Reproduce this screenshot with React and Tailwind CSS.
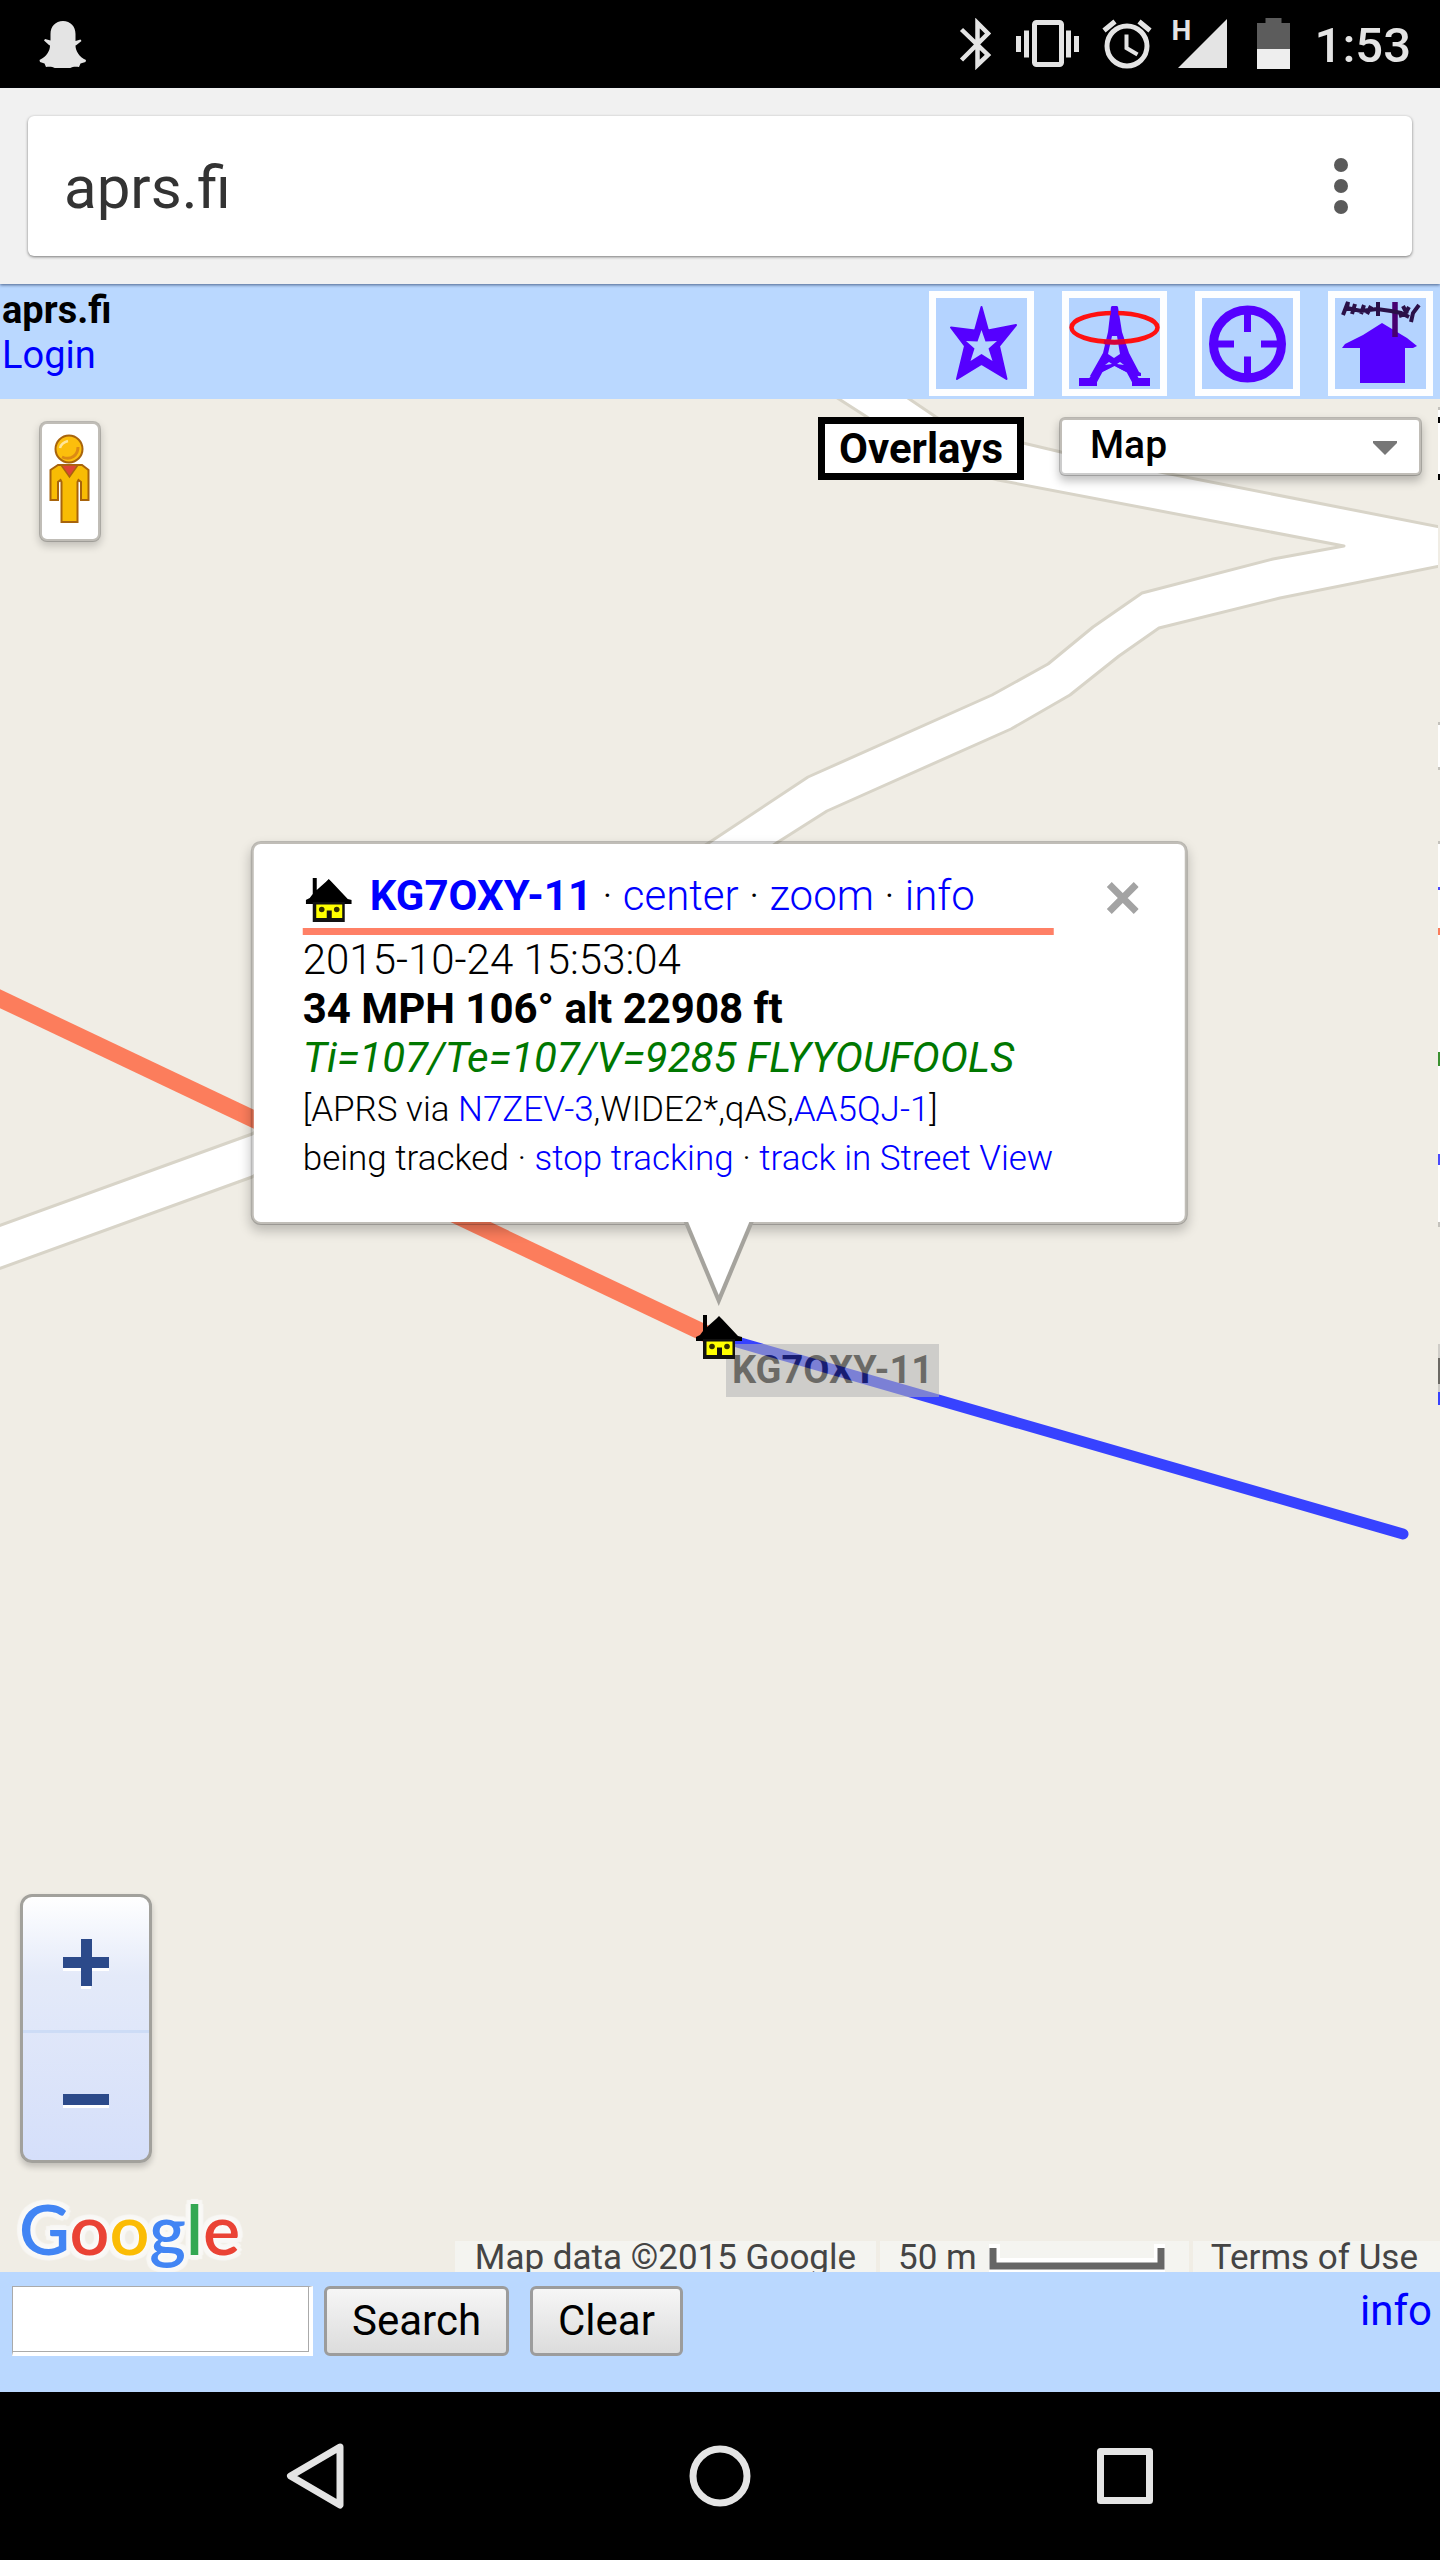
const link = 'text-[#0000ff]';

function Snapchat() {
  return (
    <svg width="48" height="48" viewBox="0 0 48 48" fill="#e4e4e4" aria-label="Snapchat">
      <path d="M24 1C16.500 1 11.500 6.500 11.500 14v6.500l-5.500-1.500-1 1.500 5 4.500 1 .5c0 5-3 11-10.500 14.500l.5 2 4.500 1.500 1.500 3.500c5-.5 8 0 10.500 2.200 2.500 1.800 4 2.300 6 2.300s3.500-.5 6-2.300c2.500-2.200 5.500-2.700 10.500-2.200l1.500-3.500 5-1.500.5-2C40 37 36.500 30.500 36.500 25.500l1-.5 5-4-1-1.500-5 1.500V14C36.500 6.500 31.500 1 24 1z" />
    </svg>
  );
}

function StatusIcons() {
  return (
    <div className="flex items-center text-[#e4e4e4]">
      <svg width="34" height="52" viewBox="0 0 34 52" fill="none" stroke="currentColor" strokeWidth="4.500" aria-label="Bluetooth">
        <path d="M2.500 11.500 29 37 18.500 47V5L29 15.500 2.500 42" />
      </svg>
      <svg className="ml-[23px]" width="64" height="52" viewBox="0 0 64 52" fill="currentColor" aria-label="Vibrate">
        <rect x="18.500" y="4.500" width="27" height="42" rx="2" fill="none" stroke="currentColor" strokeWidth="5" />
        <path d="M0 18h5v16H0zM8 12.500h5v27H8zM50 12.500h5v27h-5zM58 18h5v16h-5z" />
      </svg>
      <svg className="ml-[22px]" width="50" height="52" viewBox="0 0 50 52" fill="none" stroke="currentColor" strokeWidth="5" aria-label="Alarm">
        <circle cx="25" cy="28" r="20" />
        <path d="M2 12.500 13 3.500M48 12.500 37 3.500" />
        <path d="M24.500 16.500V30l11 6.500" strokeWidth="4" />
      </svg>
      <div className="relative ml-[20px]">
        <svg width="56" height="52" viewBox="0 0 56 52" fill="currentColor" aria-label="Signal">
          <path d="M55 1v49H6z" />
        </svg>
        <span className="absolute top-0 left-0 text-[28px] leading-[26px] font-bold">H</span>
      </div>
      <svg className="ml-[29px]" width="33" height="52" viewBox="0 0 33 52" aria-label="Battery">
        <path d="M8.500 0h16v5H33v26H0V5h8.500z" fill="#5c5c5c" />
        <path d="M0 31h33v20H0z" fill="#eee" />
      </svg>
      <time className="ml-[25px] pt-1 text-[49px] leading-[52px] font-medium">1:53</time>
    </div>
  );
}

function HouseMark({ className }) {
  return (
    <svg className={className} width="46" height="44" viewBox="0 0 46 44" aria-hidden="true">
      <path d="M7 0h4v12L20 4l3-3 3 3 16 17 4 1v4H0v-4l4-2 3-4z" fill="#000" />
      <path d="M7 24h32v20H7z" fill="#111" />
      <path d="M10.500 26.500h26V40h-26z" fill="#ff0" />
      <path d="M21 32.500h5V41h-5z" fill="#111" />
      <circle cx="16" cy="31.500" r="2.800" fill="#332f00" />
      <circle cx="31" cy="31.500" r="2.800" fill="#332f00" />
    </svg>
  );
}

function ToolButton({ label, children }) {
  return (
    <button aria-label={label} className="size-[105px] border-[7px] border-[#fdfeff] bg-[#b4d3ff]">
      <svg className="size-full overflow-visible" viewBox="0 0 91 91" fill="none" stroke="#5500ff">
        {children}
      </svg>
    </button>
  );
}

function Toolbox() {
  return (
    <nav className="flex gap-[28px]">
      <ToolButton label="Favourites">
        <path d="M45.500 9 52 32.500 80 27 63 48 70.500 81 45.500 66 21 81 29 48 15 29.500 39 32.500z" fill="#5500ff" stroke="#5500ff" strokeWidth="2" strokeLinejoin="round" />
        <path d="M45.500 32 49.500 43.500 61 43 52.500 50.500 56.500 63 45.500 56 34.500 63 38.500 50.500 30 43 41.500 43.500z" fill="#b4d3ff" stroke="none" />
      </ToolButton>
      <ToolButton label="Stations">
        <path d="M42 9h7l4 25 7 21 10 19 2 1v3H64L45.500 68 26 78h-5L34 55l5-21z" fill="#5500ff" stroke="none" />
        <path d="M43 38h5l3 18-6 4-6-4zM36 67l4-3 3 2zM55 67l-4-3-3 2z" fill="#b4d3ff" stroke="none" />
        <path d="M28 79 45.500 71 63 79" stroke="#b4d3ff" strokeWidth="4" />
        <path d="M10 80h18v8H10zM63 80h18v8H63zM26 72l8 1-7 13H16zM57 73l8-1 8 14h-9z" fill="#5500ff" stroke="none" />
        <ellipse cx="45.500" cy="29.500" rx="43" ry="14.500" stroke="#ff1111" strokeWidth="4.500" />
        <path d="M42.500 8h6l3 30-12 0z" fill="#5500ff" stroke="none" />
        <path d="M35 44c7 .6 14 .6 21 0" stroke="#d3003c" strokeWidth="4.500" />
      </ToolButton>
      <ToolButton label="My location">
        <circle cx="45.500" cy="46" r="34" strokeWidth="9" />
        <path d="M45.500 16v18M45.500 58.500V78M14 46h18M59 46h18" strokeWidth="7" />
      </ToolButton>
      <ToolButton label="Home station">
        <path d="M47 25 72 40 82 48 78 50H70V85H25V50H7L10 46 28 37z" fill="#5500ff" stroke="none" />
        <path d="M60 4v35" stroke="#470070" strokeWidth="5.500" />
        <path d="M8 17 13 4 12 10l14 3 16-2 14 2 10 2 8 4M20 6l-3 10M29 7l-3 9M43 4v14M36 8l-4 8M64 18l6-2 4-7M76 24l2-9 6-8M68 8l4 8" stroke="#2a1048" strokeWidth="4" />
      </ToolButton>
    </nav>
  );
}

function MapCanvas() {
  return (
    <svg className="absolute inset-0 size-full" viewBox="0 399 1440 1873" preserveAspectRatio="xMidYMid slice" fill="none" aria-hidden="true">
      <path
        d="M828 392 867 417 925 455Q935 464 998 480L1344 546 1273 559 1142 593 1093 627 1048 664 992 695 808 777 707 844 252 1134-10 1229V1272L252 1177 775 844 827 811 1011 729 1070 695 1119 656 1159 628 1280 598 1450 564V529L1165 473 1061 452 1023 443Q965 435 936 417L899 392z"
        fill="#fff"
        stroke="#d8d4c8"
        strokeWidth="3"
        strokeLinejoin="round"
      />
      <path d="M-10 994 717 1339" stroke="#fc7d5c" strokeWidth="17" />
      <path d="M720 1337 1403 1534" stroke="#3742ff" strokeWidth="11" strokeLinecap="round" />
    </svg>
  );
}

function EdgeSliver() {
  return (
    <svg className="absolute top-0 right-0" width="2" height="1100" viewBox="0 399 2 1100" shapeRendering="crispEdges" aria-hidden="true">
      <path d="M0 399h2v1100H0z" fill="#f0ede5" />
      <path d="M0 407h2v73H0zM0 725h2v42H0zM0 844h2v378H0z" fill="#fff" />
      <path d="M0 417h2v6H0zM0 474h2v6H0z" fill="#000" />
      <path d="M0 407h2v3H0zM0 722h2v3H0zM0 767h2v3H0zM0 841h2v3H0zM0 1222h2v5H0z" fill="#c4c2bc" />
      <path d="M0 887h2v3H0zM0 1154h2v11H0z" fill="#4a4aff" />
      <path d="M0 928h2v7H0z" fill="#fc7d5c" />
      <path d="M0 1052h2v14H0z" fill="#3b9130" />
      <path d="M0 1344h2v53H0z" fill="#cfcdc8" />
      <path d="M0 1358h2v26H0z" fill="#6b6964" />
      <path d="M0 1392h2v13H0z" fill="#3742ff" />
    </svg>
  );
}

function Pegman() {
  return (
    <button aria-label="Street View Pegman" className="absolute top-[22px] left-[39px] rounded-lg border-[3px] border-black/20 bg-white bg-clip-padding shadow-[0_4px_8px_rgba(0,0,0,0.2)]">
      <svg width="56" height="115" viewBox="0 0 56 115" stroke="#a8640c" strokeWidth="2">
        <path d="M16 41h24l6.500 5V76H39V58l-2.500-2-1 2v40H19.500V58l-1-2-2.500 2v18H8.500V46z" fill="#f8bc04" />
        <path d="M19 41h17l-8.500 12z" fill="#dc4437" strokeWidth="1.500" />
        <circle cx="27" cy="25" r="13.500" fill="#fcbe0c" />
        <path d="M20 33c9 4 16-2 16-10" fill="none" stroke="#dc8a14" strokeWidth="3" />
        <path d="M18 24c1-4 4-6 8-7" fill="none" stroke="#ffe69a" strokeWidth="2.500" />
      </svg>
    </button>
  );
}

function ZoomControl() {
  return (
    <div className="absolute bottom-[109px] left-[20px] flex w-[132px] flex-col overflow-hidden rounded-xl border-[3px] border-[#a2a19c] bg-linear-to-b from-[#ffffff] via-[#e4eaf9] via-30% to-[#d5dffa] shadow-[0_4px_6px_rgba(0,0,0,0.2)]">
      <button aria-label="Zoom in" className="flex h-[136px] items-center justify-center border-b-[3px] border-[#cddcf6]">
        <svg width="46" height="50" viewBox="0 0 46 50">
          <path d="M0 21h18v18h10V21h18v11H28v18H18V32H0z" fill="#fff" />
          <path d="M18 0h11v18h17v11H29v18H18V29H0V18h18z" fill="#2c4a8a" />
        </svg>
      </button>
      <button aria-label="Zoom out" className="flex h-[127px] items-center justify-center pt-2">
        <svg width="46" height="14" viewBox="0 0 46 14">
          <path d="M0 3h46v11H0z" fill="#fff" />
          <path d="M0 0h46v11H0z" fill="#2c4a8a" />
        </svg>
      </button>
    </div>
  );
}

function GoogleLogo() {
  return (
    <a
      href="#google"
      aria-label="Google"
      className="absolute bottom-[4px] left-[19px] font-[Lato,sans-serif] text-[70px] leading-[80px] font-semibold [text-shadow:0_0_6px_#fff,5px_0_1px_#f8f7f4,-5px_0_1px_#f8f7f4,0_5px_1px_#f8f7f4,0_-5px_1px_#f8f7f4,4px_4px_1px_#f8f7f4,-4px_4px_1px_#f8f7f4,4px_-4px_1px_#f8f7f4,-4px_-4px_1px_#f8f7f4]"
    >
      <span className="text-[#4285f4]">G</span>
      <span className="text-[#ea4335]">o</span>
      <span className="text-[#fbbc05]">o</span>
      <span className="text-[#4285f4]">g</span>
      <span className="text-[#34a853]">l</span>
      <span className="text-[#ea4335]">e</span>
    </a>
  );
}

function Attribution() {
  return (
    <div className="absolute right-0 bottom-0 flex h-[31px] gap-1 text-[35px] leading-[34px] whitespace-nowrap text-[#444]">
      <span className="bg-[#f4f4f0] px-[20px]">Map data ©2015 Google</span>
      <span className="flex gap-[12px] bg-[#f4f4f0] pr-[24px] pl-[18px]">
        50 m
        <svg width="176" height="31" viewBox="0 0 176 31" fill="none">
          <path d="M0 3h11v14h154V3h11v28H0z" fill="#fff" />
          <path d="M4 7v18h168V7" stroke="#666" strokeWidth="7" />
        </svg>
      </span>
      <a href="#terms" className="bg-[#f4f4f0] pr-[22px] pl-[18px]">Terms of Use</a>
    </div>
  );
}

function StationPopup() {
  return (
    <section className="absolute bottom-[111px] -left-px flex w-max -translate-x-1/2 gap-[53px] rounded-[10px] border-[3px] border-black/20 bg-white bg-clip-padding pt-[27px] pr-[46px] pb-[39px] pl-[49px] text-[42px] leading-[49px] font-light whitespace-nowrap text-black shadow-[0_6px_12px_rgba(0,0,0,0.22)]">
      <div>
        <h1 className="flex h-[64px] border-b-[7px] border-[#ff8066] leading-[50px]">
          <HouseMark className="mt-[7px] mr-[18px] ml-[3px]" />
          <span>
            <a href="#station" className={`${link} font-bold`}>KG7OXY-11</a> · <a href="#center" className={link}>center</a> · <a href="#zoom" className={link}>zoom</a> · <a href="#info" className={link}>info</a>
          </span>
        </h1>
        <p>2015-10-24 15:53:04</p>
        <p className="font-bold">34 MPH 106° alt 22908 ft</p>
        <p className="font-normal text-[#007700] italic">Ti=107/Te=107/V=9285 FLYYOUFOOLS</p>
        <p className="pt-[3px] text-[35px]">
          [APRS via <a href="#n7zev" className={link}>N7ZEV-3</a>,WIDE2*,qAS,<a href="#aa5qj" className={link}>AA5QJ-1</a>]
        </p>
        <p className="text-[35px]">
          being tracked · <a href="#stop" className={link}>stop tracking</a> · <a href="#street" className={link}>track in Street View</a>
        </p>
      </div>
      <button aria-label="Close" className="mt-[11px] self-start">
        <svg width="32" height="32" viewBox="0 0 32 32" stroke="#a3a3a3" strokeWidth="7" strokeLinecap="square">
          <path d="M5 5l22 22M27 5 5 27" />
        </svg>
      </button>
      <svg className="absolute top-full left-1/2 -translate-x-1/2 overflow-visible" width="76" height="86" viewBox="0 0 76 86" aria-hidden="true">
        <path d="M3 0 38 84 73 0z" fill="#a5a39d" />
        <path d="M7 -1 38 73 69 -1z" fill="#fff" />
      </svg>
    </section>
  );
}

function MapView() {
  return (
    <main className="relative min-h-[1400px] flex-1 overflow-hidden bg-[#f0ede5]">
      <MapCanvas />
      <EdgeSliver />
      <Pegman />
      <div className="absolute top-[18px] right-[18px] flex items-start gap-[35px]">
        <button className="h-[63px] border-[7px] border-black bg-white px-[14px] text-[42px] leading-[47px] font-bold">Overlays</button>
        <label className="relative rounded-md border-[3px] border-black/20 bg-white bg-clip-padding shadow-[0_5px_10px_rgba(0,0,0,0.25)]">
          <select aria-label="Map type" className="block h-[53px] w-[357px] appearance-none bg-transparent pb-[2px] pl-[28px] text-[39px] leading-[51px] font-medium outline-none">
            <option>Map</option>
          </select>
          <svg className="pointer-events-none absolute top-[21px] right-[22px]" width="24" height="14" viewBox="0 0 24 14" fill="#777">
            <path d="M0 0h24v2L12 14 0 2z" />
          </svg>
        </label>
      </div>
      <div className="absolute top-1/2 left-1/2">
        <span className="absolute top-[8px] left-[6px] bg-[#b4b4b4] px-[6px] text-[38px] leading-[53px] font-bold whitespace-nowrap opacity-55">KG7OXY-11</span>
        <div className="absolute bottom-[-23px] left-[-24px] w-[46px]">
          <HouseMark />
        </div>
        <StationPopup />
      </div>
      <ZoomControl />
      <GoogleLogo />
      <Attribution />
    </main>
  );
}

export default function App() {
  return (
    <div className="flex min-h-screen flex-col bg-black font-[Roboto,sans-serif]">
      <div className="flex h-[88px] items-center justify-between bg-black pr-[29px] pl-[39px]">
        <Snapchat />
        <StatusIcons />
      </div>
      <div className="relative z-10 bg-[#f1f1f1] p-[28px] shadow-[0_1px_3px_rgba(0,20,60,0.6)]">
        <div className="flex h-[140px] items-center rounded-md bg-white pr-[55px] pl-[36px] shadow-[0_1px_3px_rgba(0,0,0,0.5)]">
          <input aria-label="Address" defaultValue="aprs.fi" className="w-full min-w-0 flex-1 bg-transparent pt-1 text-[60px] leading-[72px] text-[#333] outline-none" />
          <button aria-label="Menu">
            <svg width="32" height="60" viewBox="0 0 32 60" fill="#5a5a5a">
              <circle cx="16" cy="9" r="7" />
              <circle cx="16" cy="30" r="7" />
              <circle cx="16" cy="51" r="7" />
            </svg>
          </button>
        </div>
      </div>
      <header className="flex h-[115px] items-start justify-between bg-[#bad8ff] pt-[7px] pr-[7px] pl-[2px]">
        <div className="-mt-[3px] flex flex-col text-[38px] leading-[45px]">
          <strong className="font-bold">aprs.fi</strong>
          <a href="#login" className={link}>Login</a>
        </div>
        <Toolbox />
      </header>
      <MapView />
      <footer className="flex h-[120px] items-start bg-[#bad8ff] pt-[14px] pr-[8px] pl-[12px] text-[42px]">
        <form className="flex" onSubmit={(e) => e.preventDefault()}>
          <input aria-label="Search" className="h-[70px] w-[301px] border-t border-r-4 border-b-4 border-l border-t-[#aaa] border-r-white border-b-white border-l-[#aaa] bg-white px-2 shadow-[inset_-1px_-1px_0_#aaa] outline-none" />
          <button className="ml-[11px] h-[70px] rounded-md border-[3px] border-[#9c9c9c] bg-linear-to-b from-[#f6f6f6] to-[#dcdcdc] px-[25px] leading-[60px]">Search</button>
          <button type="reset" className="ml-[21px] h-[70px] rounded-md border-[3px] border-[#9c9c9c] bg-linear-to-b from-[#f6f6f6] to-[#dcdcdc] px-[25px] leading-[60px]">Clear</button>
        </form>
        <a href="#info" className={`${link} ml-auto leading-[50px]`}>info</a>
      </footer>
      <nav className="grid h-[168px] grid-cols-[1fr_692px_1fr] items-center bg-black">
        <button aria-label="Back" className="mr-[29px] justify-self-end">
          <svg width="60" height="68" viewBox="0 0 60 68" fill="none" stroke="#e4e4e4" strokeWidth="7" strokeLinejoin="round">
            <path d="M55 5 5.500 34 55 63z" />
          </svg>
        </button>
        <button aria-label="Home" className="justify-self-center">
          <svg width="62" height="62" viewBox="0 0 62 62" fill="none" stroke="#e4e4e4" strokeWidth="7">
            <circle cx="31" cy="31" r="27" />
          </svg>
        </button>
        <button aria-label="Recent apps" className="ml-[31px] justify-self-start">
          <svg width="56" height="56" viewBox="0 0 56 56" fill="none" stroke="#e4e4e4" strokeWidth="7" strokeLinejoin="round">
            <path d="M3.500 3.500h49v49h-49z" />
          </svg>
        </button>
      </nav>
    </div>
  );
}
